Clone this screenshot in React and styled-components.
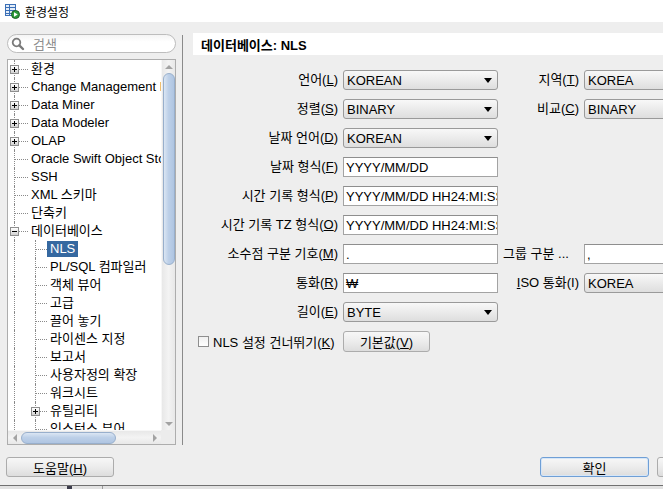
import React from 'react';
import styled, { createGlobalStyle, css } from 'styled-components';

const Global = createGlobalStyle`
  html, body { margin: 0; padding: 0; overflow: hidden; background: #eeeeee; }
  body {
    font-family: "Liberation Sans", "Noto Sans CJK KR", sans-serif;
    font-size: 13px;
    color: #000;
  }
  * { box-sizing: border-box; }
`;

const Window = styled.div`
  width: 772px;
  height: 489px;
  display: flex;
  flex-direction: column;
  background: #eeeeee;
  overflow: hidden;
`;

const TitleBar = styled.div`
  height: 22px;
  flex: none;
  background: #ffffff;
  display: flex;
  align-items: center;
  gap: 5px;
  padding-left: 4px;
  font-size: 12px;
`;

const Body = styled.div`
  height: 423px;
  flex: none;
  display: flex;
  padding-top: 11px;
`;

const LeftCol = styled.div`
  width: 169px;
  margin-left: 7px;
  padding-top: 1px;
  display: flex;
  flex-direction: column;
  gap: 6px;
`;

const Search = styled.div`
  height: 19px;
  flex: none;
  border: 1px solid #bdbdbd;
  border-radius: 10px;
  background: linear-gradient(#f4f4f4, #ffffff 40%);
  display: flex;
  align-items: center;
  gap: 8px;
  padding-left: 3px;
  color: #8d8d8d;
`;

const TreeBox = styled.div`
  flex: 1;
  border: 1px solid #adadad;
  background: #ffffff;
  display: grid;
  grid-template-columns: 1fr 14px;
  grid-template-rows: 1fr 14px;
  overflow: hidden;
`;

const TreeList = styled.div`
  overflow: hidden;
  display: flex;
  flex-direction: column;
`;

const TreeRow = styled.div`
  height: 18px;
  flex: none;
  display: flex;
  align-items: center;
  white-space: nowrap;
`;

const Gutter = styled.span`
  position: relative;
  flex: none;
  width: ${p => p.$w}px;
  height: 18px;
  display: flex;
  align-items: center;
  padding-left: ${p => p.$x - 4}px;
  &::before {
    content: none;
    position: absolute;
    left: ${p => p.$x}px;
    top: 0;
    bottom: 0;
    border-left: 1px dotted #8a8a8a;
  }
  &::after {
    content: none;
    position: absolute;
    left: ${p => p.$x}px;
    right: 0;
    top: 9px;
    border-top: 1px dotted #8a8a8a;
  }
  ${p => p.$v && css`&::before { content: ""; }`}
  ${p => p.$h && css`&::after { content: ""; }`}
`;

const Toggle = styled.span`
  position: relative;
  z-index: 1;
  width: 9px;
  height: 9px;
  border: 1px solid #8f8f8f;
  background: linear-gradient(#ffffff, #d2d2d2);
  &::before {
    content: "";
    position: absolute;
    left: 1px;
    top: 3px;
    width: 5px;
    height: 1px;
    background: #000;
  }
  &::after {
    content: "";
    position: absolute;
    left: 3px;
    top: 1px;
    width: 1px;
    height: 5px;
    background: #000;
    display: ${p => (p.$open ? 'none' : 'block')};
  }
`;

const TreeLabel = styled.span`
  height: 16px;
  line-height: 16px;
  padding: 0 3px;
  ${p => p.$selected && css`
    background: #3568a0;
    color: #ffffff;
  `}
`;

const VScroll = styled.div`
  background: linear-gradient(to right, #e8e8e8, #f3f3f3 50%, #e8e8e8);
  border-left: 1px solid #f7f7f7;
  display: flex;
  flex-direction: column;
  align-items: center;
`;

const ArrowBtn = styled.div`
  flex: none;
  width: 13px;
  height: 13px;
  display: flex;
  align-items: center;
  justify-content: center;
`;

const Thumb = styled.div`
  flex: none;
  border: 1px solid #98afcc;
  border-radius: 6px;
  ${p => p.$vertical
    ? css`
      width: 12px;
      height: 192px;
      background: linear-gradient(to right, #dbe6f3, #bdd0e8 45%, #afc5e2);
    `
    : css`
      width: 95px;
      height: 12px;
      margin-left: 0px;
      background: linear-gradient(#dbe6f3, #bdd0e8 45%, #afc5e2);
    `}
`;

const TrackFill = styled.div`
  flex: 1;
`;

const HScroll = styled.div`
  background: linear-gradient(#e8e8e8, #f3f3f3 50%, #e8e8e8);
  border-top: 1px solid #f7f7f7;
  display: flex;
  align-items: center;
`;

const Corner = styled.div`
  background: #ececec;
`;

const Divider = styled.div`
  width: 1px;
  margin-left: 6px;
  margin-top: 2px;
  background: #8a8a8a;
  flex: none;
`;

const RightPanel = styled.div`
  flex: 1;
  margin-left: 10px;
  display: flex;
  flex-direction: column;
`;

const PanelHeader = styled.div`
  height: 22px;
  flex: none;
  background: #ffffff;
  display: flex;
  align-items: center;
  padding-left: 8px;
  font-weight: bold;
`;

const Form = styled.div`
  display: grid;
  grid-template-columns: 140px 155px 76px 155px;
  grid-auto-rows: 20px;
  column-gap: 5px;
  row-gap: 9px;
  padding: 15px 0 0 5px;
`;

const Label = styled.span`
  align-self: center;
  text-align: ${p => (p.$left ? 'left' : 'right')};
  white-space: nowrap;
  overflow: hidden;
  line-height: 16px;
`;

const Combo = styled.div`
  height: 20px;
  border: 1px solid #9a9a9a;
  border-radius: 3px;
  background: linear-gradient(#f8f8f8, #ebebeb 50%, #dedede);
  display: flex;
  align-items: center;
  justify-content: space-between;
  padding: 0 5px 0 3px;
  white-space: nowrap;
  overflow: hidden;
`;

const Caret = styled.span`
  width: 0;
  height: 0;
  border-left: 4px solid transparent;
  border-right: 4px solid transparent;
  border-top: 5px solid #000;
`;

const Field = styled.div`
  height: 20px;
  border: 1px solid #a3a3a3;
  border-top-color: #8e8e8e;
  background: #ffffff;
  display: flex;
  align-items: center;
  padding-left: 2px;
  white-space: nowrap;
  overflow: hidden;
`;

const CheckCell = styled.label`
  display: flex;
  align-items: center;
  gap: 4px;
  white-space: nowrap;
`;

const CheckBox = styled.span`
  width: 11px;
  height: 11px;
  border: 1px solid #8e8e8e;
  background: linear-gradient(#f0f0f0, #ffffff);
  flex: none;
`;

const PushButton = styled.button`
  width: ${p => p.$w}px;
  height: ${p => p.$h || 20}px;
  flex: none;
  font: inherit;
  color: #000;
  border: 1px solid #acacac;
  border-radius: 3px;
  background: linear-gradient(#f7f7f7, #ececec 50%, #dddddd);
  padding: 0;
  ${p => p.$default && css`
    border-color: #6f9fd6;
    box-shadow: inset 0 0 0 1px #d6e6f7;
  `}
`;

const Footer = styled.div`
  height: 40px;
  flex: none;
  display: flex;
  align-items: flex-start;
  gap: 8px;
  padding: 12px 6px 0;
`;

const Spacer = styled.div`
  flex: 1;
`;

const BottomStrip = styled.div`
  height: 4px;
  flex: none;
  border-top: 1px solid #707070;
  background: #e2e2e2;
  display: flex;
`;

const StripMark = styled.span`
  width: ${p => p.$w}px;
  margin-left: ${p => p.$ml}px;
  background: ${p => p.$c};
  flex: none;
`;

const Tri = ({ dir }) => {
  const pts = {
    up: '0,4 4,0 8,4',
    down: '0,0 8,0 4,4',
    left: '4,0 4,8 0,4',
    right: '0,0 0,8 4,4',
  }[dir];
  const vertical = dir === 'up' || dir === 'down';
  return (
    <svg width={vertical ? 8 : 4} height={vertical ? 4 : 8} viewBox={vertical ? '0 0 8 4' : '0 0 4 8'}>
      <polygon points={pts} fill="#a3a3a3" />
    </svg>
  );
};

const AppIcon = () => (
  <svg width="16" height="16" viewBox="0 0 16 16">
    <rect x="1.5" y="1.5" width="10" height="11" fill="#e4edf8" stroke="#3b6fb6" />
    <line x1="1.5" y1="4.5" x2="11.5" y2="4.5" stroke="#3b6fb6" />
    <line x1="1.5" y1="7.5" x2="11.5" y2="7.5" stroke="#3b6fb6" />
    <line x1="1.5" y1="10.5" x2="11.5" y2="10.5" stroke="#3b6fb6" />
    <line x1="5.5" y1="1.5" x2="5.5" y2="12.5" stroke="#3b6fb6" />
    <circle cx="11.5" cy="11.5" r="4" fill="#2c9b3a" stroke="#1c5f24" />
    <path d="M10 9.3 L13.7 11.5 L10 13.7 Z" fill="#ffffff" />
  </svg>
);

const SearchIcon = () => (
  <svg width="14" height="14" viewBox="0 0 14 14">
    <circle cx="5.5" cy="5.5" r="3.8" fill="none" stroke="#7a7a7a" strokeWidth="1.8" />
    <line x1="8.3" y1="8.3" x2="12" y2="12" stroke="#7a7a7a" strokeWidth="2.4" strokeLinecap="round" />
  </svg>
);

const tree = [
  { label: '환경', toggle: 'closed' },
  { label: 'Change Management Database', toggle: 'closed' },
  { label: 'Data Miner', toggle: 'closed' },
  { label: 'Data Modeler', toggle: 'closed' },
  { label: 'OLAP', toggle: 'closed' },
  { label: 'Oracle Swift Object Storage' },
  { label: 'SSH' },
  { label: 'XML 스키마' },
  { label: '단축키' },
  { label: '데이터베이스', toggle: 'open' },
  { label: 'NLS', level: 1, selected: true },
  { label: 'PL/SQL 컴파일러', level: 1 },
  { label: '객체 뷰어', level: 1 },
  { label: '고급', level: 1 },
  { label: '끌어 놓기', level: 1 },
  { label: '라이센스 지정', level: 1 },
  { label: '보고서', level: 1 },
  { label: '사용자정의 확장', level: 1 },
  { label: '워크시트', level: 1 },
  { label: '유틸리티', level: 1, toggle: 'closed' },
  { label: '인스턴스 뷰어', level: 1 },
];

const TreeItem = ({ item }) => {
  const lvl = item.level || 0;
  const toggle = item.toggle ? <Toggle $open={item.toggle === 'open'} /> : null;
  return (
    <TreeRow>
      {lvl === 0 ? (
        <Gutter $w={20} $x={6} $v $h>{toggle}</Gutter>
      ) : (
        <>
          <Gutter $w={20} $x={6} $v />
          <Gutter $w={19} $x={7} $v $h>{toggle}</Gutter>
        </>
      )}
      <TreeLabel $selected={item.selected}>{item.label}</TreeLabel>
    </TreeRow>
  );
};

const C = ({ children }) => (
  <Combo>
    <span>{children}</span>
    <Caret />
  </Combo>
);

export default function App() {
  return (
    <>
      <Global />
      <Window>
        <TitleBar>
          <AppIcon />
          <span>환경설정</span>
        </TitleBar>
        <Body>
          <LeftCol>
            <Search>
              <SearchIcon />
              <span>검색</span>
            </Search>
            <TreeBox>
              <TreeList>
                {tree.map((it, i) => (
                  <TreeItem key={i} item={it} />
                ))}
              </TreeList>
              <VScroll>
                <ArrowBtn><Tri dir="up" /></ArrowBtn>
                <Thumb $vertical />
                <TrackFill />
                <ArrowBtn><Tri dir="down" /></ArrowBtn>
              </VScroll>
              <HScroll>
                <ArrowBtn><Tri dir="left" /></ArrowBtn>
                <Thumb />
                <TrackFill />
                <ArrowBtn><Tri dir="right" /></ArrowBtn>
              </HScroll>
              <Corner />
            </TreeBox>
          </LeftCol>
          <Divider />
          <RightPanel>
            <PanelHeader>데이터베이스: NLS</PanelHeader>
            <Form>
              <Label>언어(<u>L</u>)</Label>
              <C>KOREAN</C>
              <Label>지역(<u>T</u>)</Label>
              <C>KOREA</C>

              <Label>정렬(<u>S</u>)</Label>
              <C>BINARY</C>
              <Label>비교(<u>C</u>)</Label>
              <C>BINARY</C>

              <Label>날짜 언어(<u>D</u>)</Label>
              <C>KOREAN</C>
              <span />
              <span />

              <Label>날짜 형식(<u>F</u>)</Label>
              <Field>YYYY/MM/DD</Field>
              <span />
              <span />

              <Label>시간 기록 형식(<u>P</u>)</Label>
              <Field>YYYY/MM/DD HH24:MI:SSXFF</Field>
              <span />
              <span />

              <Label>시간 기록 TZ 형식(<u>O</u>)</Label>
              <Field>YYYY/MM/DD HH24:MI:SSXFF TZR</Field>
              <span />
              <span />

              <Label>소수점 구분 기호(<u>M</u>)</Label>
              <Field>.</Field>
              <Label $left>그룹 구분 ...</Label>
              <Field>,</Field>

              <Label>통화(<u>R</u>)</Label>
              <Field>₩</Field>
              <Label><u>I</u>SO 통화(I)</Label>
              <C>KOREA</C>

              <Label>길이(<u>E</u>)</Label>
              <C>BYTE</C>
              <span />
              <span />

              <CheckCell>
                <CheckBox />
                <span>NLS 설정 건너뛰기(<u>K</u>)</span>
              </CheckCell>
              <PushButton $w={87} $h={21}>기본값(<u>V</u>)</PushButton>
            </Form>
          </RightPanel>
        </Body>
        <Footer>
          <PushButton $w={108}>도움말(<u>H</u>)</PushButton>
          <Spacer />
          <PushButton $w={109} $default>확인</PushButton>
          <PushButton $w={109}>취소</PushButton>
        </Footer>
        <BottomStrip>
          <StripMark $w={5} $ml={67} $c="#3c3c4c" />
          <StripMark $w={1} $ml={30} $c="#9a9a9a" />
        </BottomStrip>
      </Window>
    </>
  );
}
